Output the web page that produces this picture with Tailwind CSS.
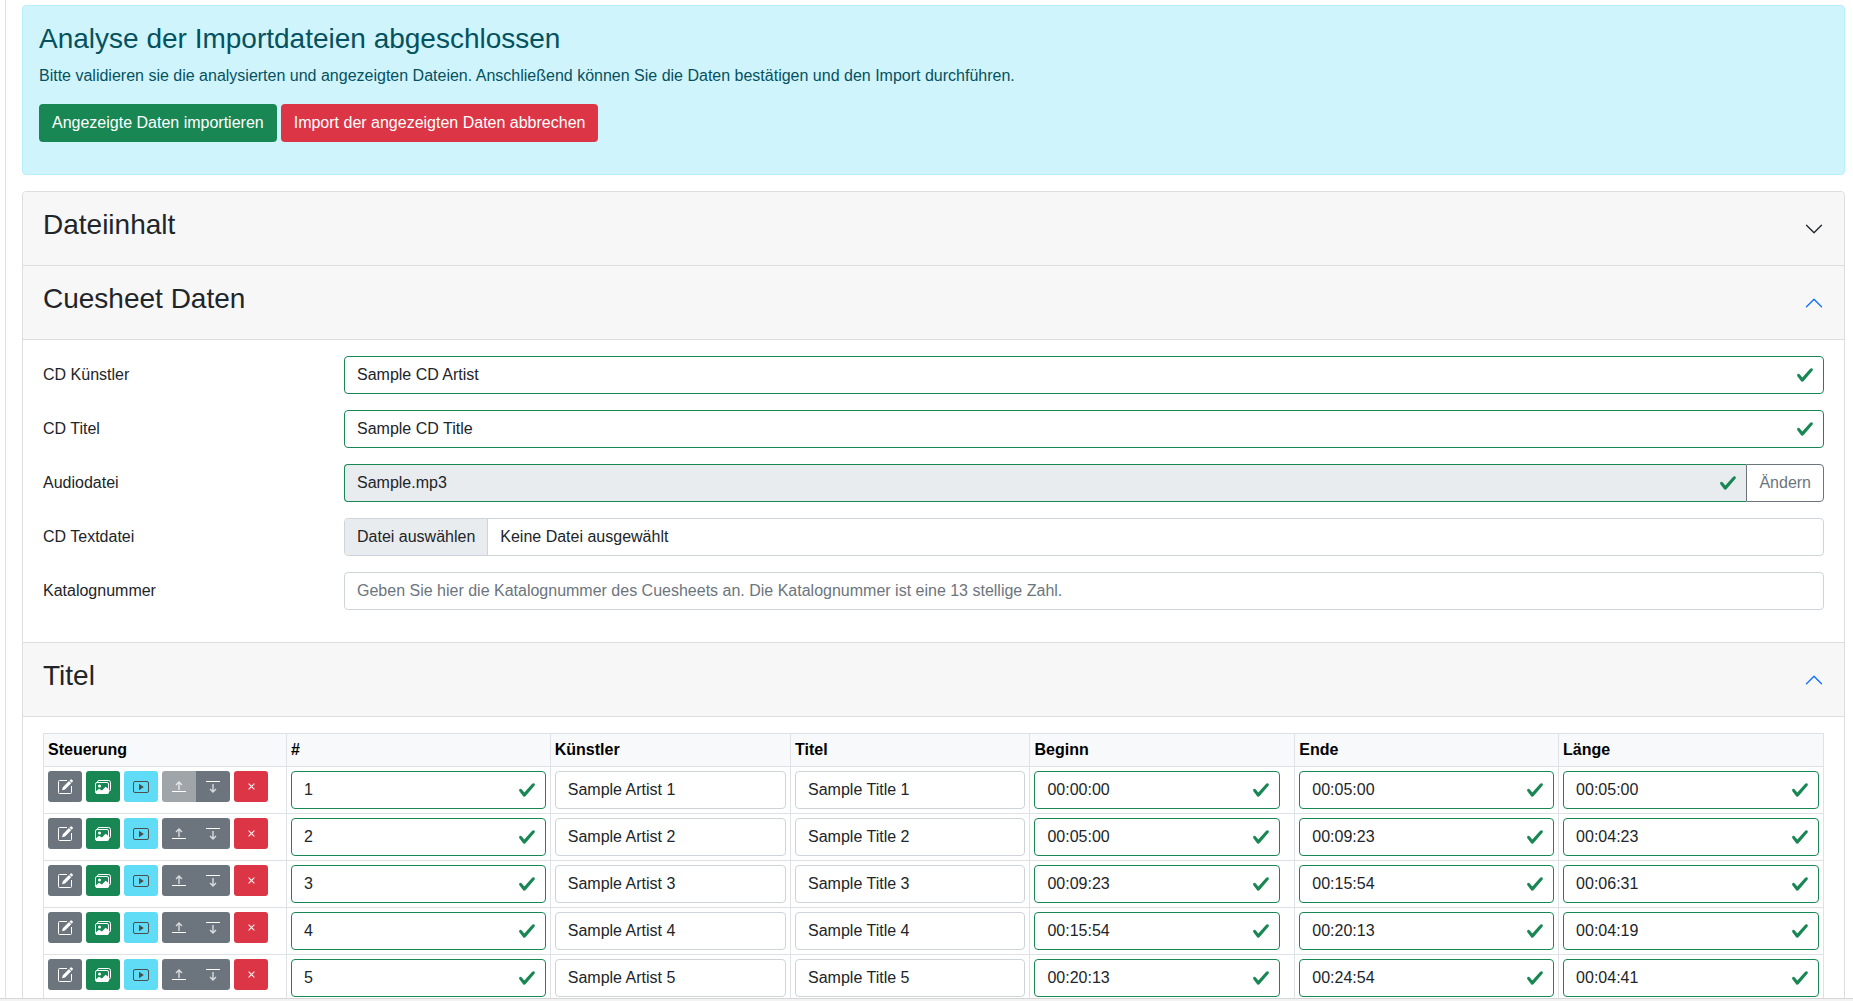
<!DOCTYPE html>
<html lang="de">
<head>
<meta charset="utf-8">
<title>Cuesheet Import</title>
<script src="https://cdn.jsdelivr.net/npm/@tailwindcss/browser@4"></script>
</head>
<body class="flex h-screen flex-col overflow-hidden bg-white font-['Liberation_Sans',Arial,sans-serif] text-base text-[#212529]">

<svg class="hidden" aria-hidden="true">
  <symbol id="check" viewBox="0 0 8 8"><path fill="#198754" d="M2.3 6.73.6 4.53c-.4-1.04.46-1.4 1.1-.8l1.1 1.4 3.4-3.8c.6-.63 1.6-.27 1.2.7l-4 4.6c-.43.5-.8.4-1.1.1z"/></symbol>
  <symbol id="chevron" viewBox="0 0 16 16"><path fill="currentColor" fill-rule="evenodd" d="M1.646 4.646a.5.5 0 0 1 .708 0L8 10.293l5.646-5.647a.5.5 0 0 1 .708.708l-6 6a.5.5 0 0 1-.708 0l-6-6a.5.5 0 0 1 0-.708z"/></symbol>
  <symbol id="edit" viewBox="0 0 15 15"><path fill="none" stroke="currentColor" d="M9 1.500H1.500q-1 0-1 1v11q0 1 1 1h11q1 0 1-1V7"/><path fill="currentColor" d="M4 11.300l.8-3 6.200-6.200 2.200 2.200-6.200 6.200zM11.500 1.600l1.200-1.200q.4-.4.900 0l1.200 1.200q.4.500 0 .9l-1.200 1.200z"/></symbol>
  <symbol id="images" viewBox="0 0 16 14"><path fill="none" stroke="currentColor" d="M2.500 2q0-1.500 1.500-1.500h9.500q2 0 2 2V9.500q0 1.500-1.500 1.500"/><rect x=".5" y="2.500" width="13" height="11" rx="1.500" fill="none" stroke="currentColor"/><circle cx="4.500" cy="6" r="1.500" fill="currentColor"/><path fill="currentColor" d="M1 13.500v-2.200l2.700-2.400q.3-.2.600 0L7 10.500l3.300-3.500q.3-.3.700 0L13.500 9v4.500z"/></symbol>
  <symbol id="play" viewBox="0 0 16 12"><rect x=".5" y=".5" width="15" height="11" rx="1.5" fill="none" stroke="currentColor"/><path fill="currentColor" d="M6 2.800v6.400L10.800 6z"/></symbol>
  <symbol id="up" viewBox="0 0 14 12"><path fill="none" stroke="currentColor" d="M0 10.500h14"/><path fill="none" stroke="currentColor" stroke-width="1.4" opacity=".75" d="M7 9V1M4 4l3-3 3 3"/></symbol>
  <symbol id="down" viewBox="0 0 14 12"><path fill="none" stroke="currentColor" d="M0 .5h14"/><path fill="none" stroke="currentColor" stroke-width="1.4" opacity=".75" d="M7 3v8M4 8l3 3 3-3"/></symbol>
  <symbol id="cross" viewBox="0 0 8 8"><path fill="none" stroke="currentColor" stroke-width="1.2" d="M.7.7l6.600 6.600M7.300.7L.7 7.300"/></symbol>
</svg>

<main class="ml-[5px] min-h-0 flex-1 overflow-hidden border-l border-[#dee2e6] pr-2 pl-4 pt-[5px]">

  <section class="mb-4 rounded border border-[#b6effb] bg-[#cff4fc] p-4 text-[#055160]">
    <h3 class="mb-2 text-[28px] leading-[34px]">Analyse der Importdateien abgeschlossen</h3>
    <p class="mb-4">Bitte validieren sie die analysierten und angezeigten Dateien. Anschließend können Sie die Daten bestätigen und den Import durchführen.</p>
    <div class="mb-4 flex gap-1">
      <button type="button" class="h-[38px] rounded bg-[#198754] px-[13px] text-white">Angezeigte Daten importieren</button>
      <button type="button" class="h-[38px] rounded bg-[#dc3545] px-[13px] text-white">Import der angezeigten Daten abbrechen</button>
    </div>
  </section>

  <div class="rounded-t border border-[#dedede]">
    <header class="flex h-[74px] items-start justify-between rounded-t border-b border-[#dedede] bg-[#f7f7f7] px-5 pt-4">
      <h3 class="text-[28px] leading-[34px]">Dateiinhalt</h3>
      <button type="button" aria-label="Dateiinhalt öffnen" class="mt-[11px]"><svg class="size-5"><use href="#chevron"/></svg></button>
    </header>
    <header class="flex h-[74px] items-start justify-between border-b border-[#dedede] bg-[#f7f7f7] px-5 pt-4">
      <h3 class="text-[28px] leading-[34px]">Cuesheet Daten</h3>
      <button type="button" aria-label="Cuesheet Daten schließen" class="mt-[11px] text-[#0d6efd]"><svg class="size-5 rotate-180"><use href="#chevron"/></svg></button>
    </header>

    <form class="grid grid-cols-[301px_minmax(0,1fr)] gap-y-4 px-5 pt-4 pb-8">
      <label for="artist" class="pt-[7px]">CD Künstler</label>
      <div class="relative"><input id="artist" value="Sample CD Artist" class="h-[38px] w-full rounded border border-[#198754] px-3"><svg class="absolute top-[10px] right-[10px] size-[18px]"><use href="#check"/></svg></div>
      <label for="title" class="pt-[7px]">CD Titel</label>
      <div class="relative"><input id="title" value="Sample CD Title" class="h-[38px] w-full rounded border border-[#198754] px-3"><svg class="absolute top-[10px] right-[10px] size-[18px]"><use href="#check"/></svg></div>
      <label for="audio" class="pt-[7px]">Audiodatei</label>
      <div class="flex">
        <div class="relative flex-1"><input id="audio" value="Sample.mp3" readonly class="h-[38px] w-full rounded-l border border-r-0 border-[#198754] bg-[#e9ecef] px-3"><svg class="absolute top-[10px] right-[9px] size-[18px]"><use href="#check"/></svg></div>
        <button type="button" class="h-[38px] rounded-r border border-[#6c757d] px-3 text-[#6c757d]">Ändern</button>
      </div>
      <label for="cdtext" class="pt-[7px]">CD Textdatei</label>
      <div class="relative flex h-[38px] items-stretch rounded border border-[#ced4da]">
        <span class="flex items-center rounded-l border-r border-[#ced4da] bg-[#e9ecef] px-3">Datei auswählen</span>
        <span class="flex items-center px-3">Keine Datei ausgewählt</span>
        <input id="cdtext" type="file" class="absolute inset-0 opacity-0">
      </div>
      <label for="catalog" class="pt-[7px]">Katalognummer</label>
      <input id="catalog" placeholder="Geben Sie hier die Katalognummer des Cuesheets an. Die Katalognummer ist eine 13 stellige Zahl." class="h-[38px] w-full rounded border border-[#ced4da] px-3 placeholder:text-[#6c757d]">
    </form>

    <header class="flex h-[75px] items-start justify-between border-y border-[#dedede] bg-[#f7f7f7] px-5 pt-4">
      <h3 class="text-[28px] leading-[34px]">Titel</h3>
      <button type="button" aria-label="Titel schließen" class="mt-[11px] text-[#0d6efd]"><svg class="size-5 rotate-180"><use href="#chevron"/></svg></button>
    </header>

    <div class="px-5 py-4">
      <table class="w-full table-fixed border-collapse">
        <colgroup><col class="w-[13.65%]"><col class="w-[14.82%]"><col class="w-[13.5%]"><col class="w-[13.45%]"><col class="w-[14.88%]"><col class="w-[14.82%]"><col class="w-[14.88%]"></colgroup>
        <thead>
          <tr class="h-[33px] bg-[#f8f9fa] text-left text-black [&>th]:border [&>th]:border-[#dee2e6] [&>th]:px-1 [&>th]:py-1"><th>Steuerung</th><th>#</th><th>Künstler</th><th>Titel</th><th>Beginn</th><th>Ende</th><th>Länge</th></tr>
        </thead>
        <tbody id="tracks"></tbody>
      </table>
    </div>
  </div>
</main>

<footer class="h-[3px] shrink-0 border-t border-[#d6d6d6] bg-[#f3f3f3]"></footer>

<script>
  const tracks = [
    ['00:00:00', '00:05:00', '00:05:00'],
    ['00:05:00', '00:09:23', '00:04:23'],
    ['00:09:23', '00:15:54', '00:06:31'],
    ['00:15:54', '00:20:13', '00:04:19'],
    ['00:20:13', '00:24:54', '00:04:41'],
  ];
  const btn = (label, look, icon, size) =>
    `<button type="button" aria-label="${label}" class="flex h-[31px] w-[34px] items-center justify-center ${look}"><svg class="${size}"><use href="#${icon}"/></svg></button>`;
  const valid = (label, value, width) =>
    `<td class="border border-[#dee2e6] p-1"><div class="relative ${width}"><input aria-label="${label}" value="${value}" class="block h-[38px] w-full rounded border border-[#198754] px-3"><svg class="absolute top-[10px] right-[10px] size-[18px]"><use href="#check"/></svg></div></td>`;
  const plain = (label, value) =>
    `<td class="border border-[#dee2e6] p-1"><input aria-label="${label}" value="${value}" class="block h-[38px] w-full rounded border border-[#ced4da] px-3"></td>`;
  document.getElementById('tracks').innerHTML = tracks.map(([begin, end, length], i) => {
    const n = i + 1;
    return `<tr class="h-[47px]"><td class="border border-[#dee2e6] p-1 align-top"><div class="flex gap-1">`
      + btn('Bearbeiten', 'rounded-[3px] bg-[#6c757d] text-white', 'edit', 'size-[15px]')
      + btn('Bilder', 'rounded-[3px] bg-[#198754] text-white', 'images', 'h-3.5 w-4')
      + btn('Abspielen', 'rounded-[3px] bg-[#61dcf6] text-[#4d4d4d]', 'play', 'h-3 w-4')
      + '<div class="flex">'
      + btn('Nach oben', i ? 'rounded-l-[3px] bg-[#6c757d] text-white' : 'rounded-l-[3px] bg-[#a0a5aa] text-white', 'up', 'h-3 w-3.5')
      + btn('Nach unten', 'rounded-r-[3px] bg-[#6c757d] text-white', 'down', 'h-3 w-3.5')
      + '</div>'
      + btn('Entfernen', 'rounded-[3px] bg-[#dc3545] text-white', 'cross', 'size-[7px]')
      + '</div></td>'
      + valid('Nummer', n, 'w-full') + plain('Künstler', 'Sample Artist ' + n) + plain('Titel', 'Sample Title ' + n)
      + valid('Beginn', begin, 'w-[96%]') + valid('Ende', end, 'w-full') + valid('Länge', length, 'w-full') + '</tr>';
  }).join('');
</script>
</body>
</html>
